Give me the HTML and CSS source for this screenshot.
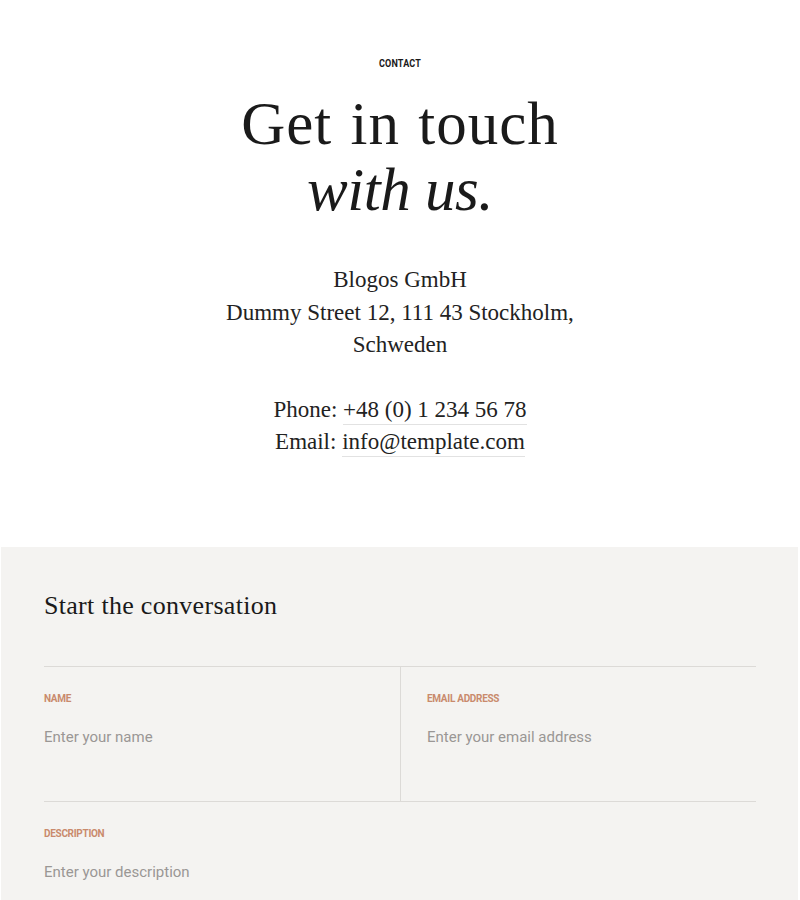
FILE: index.html
```html
<!DOCTYPE html>
<html lang="en">
<head>
<meta charset="utf-8">
<title>Contact</title>
<link rel="stylesheet" href="styles.css">
</head>
<body>
<section class="hero">
  <div class="eyebrow">CONTACT</div>
  <h1 class="title"><span class="t1">Get in touch</span><em class="t2">with us.</em></h1>
  <address class="addr">
    <p>Blogos GmbH<br>Dummy Street 12, 111 43 Stockholm,<br>Schweden</p>
    <p>Phone: <a href="#" class="lnk">+48 (0) 1 234 56 78</a><br>Email: <a href="#" class="lnk">info@template.com</a></p>
  </address>
</section>
<section class="form-sec">
  <h2 class="form-title">Start the conversation</h2>
  <form class="form">
    <div class="row two">
      <label class="field">
        <span class="label">NAME</span>
        <input class="input" type="text" placeholder="Enter your name">
      </label>
      <label class="field right">
        <span class="label">EMAIL ADDRESS</span>
        <input class="input" type="email" placeholder="Enter your email address">
      </label>
    </div>
    <div class="row">
      <label class="field last">
        <span class="label">DESCRIPTION</span>
        <input class="input" type="text" placeholder="Enter your description">
      </label>
    </div>
  </form>
</section>
</body>
</html>
```
FILE: styles.css
```css
* { box-sizing: border-box; }
html, body { margin: 0; padding: 0; background: #fff; }
body { color: #1c1c1c; font-family: "Liberation Serif", serif; }

.hero { text-align: center; padding-top: 58px; height: 547px; }
.eyebrow { font-family: Roboto, "Liberation Sans", sans-serif; font-weight: 700; font-size: 10px; letter-spacing: 0.2px; color: #1a1a1a; transform: scaleX(0.9); line-height: 12px; }
.title { margin: 21px 0 0; font-family: "Liberation Serif", serif; font-weight: 400; font-size: 61px; line-height: 66px; color: #1a1a1a; }
.t1 { display: block; letter-spacing: 1px; word-spacing: 2px; }
.t2 { display: block; font-style: italic; letter-spacing: -0.5px; }

.addr { font-style: normal; margin-top: 41px; font-family: "Liberation Serif", serif; font-size: 23px; line-height: 32.5px; color: #222; }
.addr p { margin: 0 0 32px; }
.lnk { color: #222; text-decoration: none; border-bottom: 1px solid #e2e2e2; padding-bottom: 2px; }

.form-sec { background: #f4f3f1; padding: 43px 42px 0 43px; margin: 0 2px 0 1px; height: 353px; overflow: hidden; }
.form-title { margin: 0 0 44px; font-family: "Liberation Serif", serif; font-weight: 400; font-size: 26px; line-height: 32px; color: #1a1a1a; letter-spacing: 0.3px; }
.row { border-top: 1px solid #dcdad7; display: grid; grid-template-columns: 1fr; }
.row.two { grid-template-columns: 1fr 1fr; }
.field { display: flex; flex-direction: column; padding: 26px 0 0; height: 134px; }
.field.last { height: 96px; }
.field.right { border-left: 1px solid #dcdad7; padding-left: 26px; }
.label { font-family: Roboto, "Liberation Sans", sans-serif; font-weight: 700; font-size: 10px; color: #c98a6c; letter-spacing: -0.3px; line-height: 12px; }
.input { margin-top: 22px; border: 0; background: transparent; padding: 0; font-family: Roboto, "Liberation Sans", sans-serif; font-size: 15px; line-height: 20px; color: #333; outline: none; width: 100%; }
.input::placeholder { color: #9a9795; }
```
